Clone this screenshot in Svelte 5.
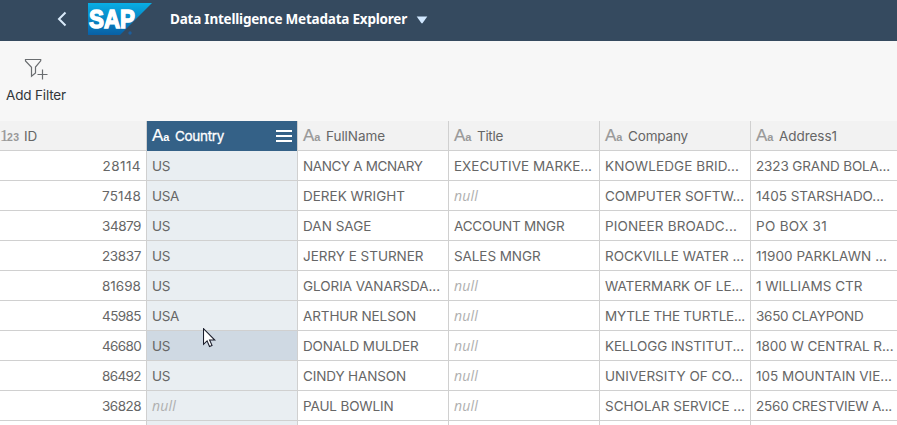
<script>
  const columns = [
    { name: 'ID', type: 'number', w: 13 },
    { name: 'Country', type: 'text', w: 49, selected: true },
    { name: 'FullName', type: 'text', w: 59 },
    { name: 'Title', type: 'text', w: 26 },
    { name: 'Company', type: 'text', w: 60 },
    { name: 'Address1', type: 'text', w: 58 }
  ];

  // Each cell is [text, text width in px]; null marks an empty value.
  const rows = [
    [['28114', 38.5], ['US', 18], ['NANCY A MCNARY', 119.5], ['EXECUTIVE MARKE...', 138], ['KNOWLEDGE BRID...', 134], ['2323 GRAND BOLA...', 134]],
    [['75148', 39], ['USA', 27], ['DEREK WRIGHT', 102], null, ['COMPUTER SOFTW...', 139], ['1405 STARSHADO...', 128]],
    [['34879', 39], ['US', 18], ['DAN SAGE', 68.5], ['ACCOUNT MNGR', 110.5], ['PIONEER BROADC...', 132], ['PO BOX 31', 71]],
    [['23837', 39], ['US', 18], ['JERRY E STURNER', 120.5], ['SALES MNGR', 86.5], ['ROCKVILLE WATER ...', 139], ['11900 PARKLAWN ...', 131]],
    [['81698', 39], ['US', 18], ['GLORIA VANARSDA...', 137], null, ['WATERMARK OF LE...', 138], ['1 WILLIAMS CTR', 106.5]],
    [['45985', 39], ['USA', 27], ['ARTHUR NELSON', 113], null, ['MYTLE THE TURTLE...', 140], ['3650 CLAYPOND', 107.5]],
    [['46680', 39], ['US', 18], ['DONALD MULDER', 115.5], null, ['KELLOGG INSTITUT...', 139], ['1800 W CENTRAL R...', 137.5]],
    [['86492', 39], ['US', 18], ['CINDY HANSON', 103], null, ['UNIVERSITY OF CO...', 138], ['105 MOUNTAIN VIE...', 136]],
    [['36828', 39], null, ['PAUL BOWLIN', 90.5], null, ['SCHOLAR SERVICE ...', 140], ['2560 CRESTVIEW A...', 136]]
  ];
  const hovered = 6;

  // Spreads the tracking so that the label takes the given width.
  function fit(node, width) {
    const natural = node.getBoundingClientRect().width;
    const spacing = (width - natural) / node.textContent.length;
    node.style.letterSpacing = `${spacing}px`;
  }
</script>

<div class="app">
  <header class="shell">
    <svg class="back" width="10" height="16" viewBox="0 0 10 16"><path d="M8.500 1.500 2 8l6.500 6.500" /></svg>
    <svg class="logo" width="65" height="33" viewBox="0 0 65 33">
      <defs>
        <linearGradient id="sap" x1="0" y1="0" x2="0" y2="1">
          <stop offset="0" stop-color="#08aee5" />
          <stop offset="1" stop-color="#0860a6" />
        </linearGradient>
      </defs>
      <path d="M0 0h64L32 32H0z" fill="url(#sap)" />
      <text x="1" y="25.200" textLength="46" lengthAdjust="spacingAndGlyphs">SAP</text>
      <circle cx="42" cy="30" r="1.700" fill="#1e5e9c" />
    </svg>
    <h1><span use:fit={237}>Data Intelligence Metadata Explorer</span></h1>
    <svg class="caret" width="12" height="8" viewBox="0 0 12 8"><path d="M.7.500h10.600L6.700 7.100Q6 7.900 5.300 7.100z" /></svg>
  </header>

  <div class="toolbar">
    <button>
      <svg width="24" height="23" viewBox="0 0 24 23">
        <path d="M1.500 1.500h15.200v1.300L11.500 9v6l-4 3.300V9.300L1.500 3z" />
        <path d="M18.500 11.500v10M13.500 16.500h10" />
      </svg>
      <span use:fit={60}>Add Filter</span>
    </button>
  </div>

  <div class="table">
    <div class="row head">
      {#each columns as col}
        <div class="cell" class:selected={col.selected}>
          {#if col.type === 'number'}
            <span class="type num"><b>1</b><small>23</small></span>
          {:else}
            <span class="type"><b>A</b><small>a</small></span>
          {/if}
          <span class="label"><span use:fit={col.w}>{col.name}</span></span>
          {#if col.selected}
            <svg class="menu" width="16" height="13" viewBox="0 0 16 13"><path d="M0 1h16M0 6h16M0 11h16" /></svg>
          {/if}
        </div>
      {/each}
    </div>
    {#each rows as row, r}
      <div class="row">
        {#each row as cell, c}
          <div class="cell" class:tint={c === 1} class:hover={c === 1 && r === hovered}>
            {#if cell}
              <span use:fit={cell[1]}>{cell[0]}</span>
            {:else}
              <i use:fit={24}>null</i>
            {/if}
          </div>
        {/each}
      </div>
    {/each}
    <div class="row">
      {#each columns as _, c}
        <div class="cell" class:tint={c === 1}></div>
      {/each}
    </div>
  </div>

  <svg class="cursor" width="13" height="20" viewBox="0 0 13 20">
    <path d="M.5.700v15.600l3.600-3.400 2.400 5.600 2.500-1.100-2.400-5.400h5.200z" />
  </svg>
</div>

<style>
  :global(body) {
    margin: 0;
    overflow: hidden;
  }
  .app {
    position: relative;
    width: 897px;
    height: 425px;
    overflow: hidden;
    background: #f7f7f7;
    color: #666;
  }
  .cell, button {
    font: 13.5px/20px Inter, Roboto, sans-serif;
  }
  span, i {
    white-space: pre;
  }
  .shell {
    display: flex;
    align-items: flex-start;
    box-sizing: border-box;
    height: 41px;
    padding-left: 57px;
    background: #354a5f;
  }
  .back {
    margin-top: 11px;
    fill: none;
    stroke: #d9eafa;
    stroke-width: 2;
  }
  .logo {
    margin: 3px 0 0 21px;
  }
  .logo text {
    font: bold 26px 'Liberation Sans', sans-serif;
    fill: #fff;
    stroke: #fff;
    stroke-width: 1.5;
  }
  h1 {
    width: 247px;
    margin: 9px 0 0 17px;
    font: bold 13.5px/20px 'Noto Sans', sans-serif;
    color: #fff;
  }
  .caret {
    margin-top: 16px;
    margin-left: -1px;
    fill: #d1e8ff;
  }
  .toolbar {
    height: 80px;
  }
  button {
    display: flex;
    flex-direction: column;
    align-items: flex-start;
    padding: 17px 0 0 6px;
    border: 0;
    background: none;
    color: #32363a;
  }
  button svg {
    margin: 0 0 4px 18px;
    fill: none;
    stroke: #6a6d70;
    stroke-width: 1.2;
  }
  .row {
    display: grid;
    grid-template-columns: 147px repeat(5, 151px);
    width: 902px;
  }
  .cell {
    display: flex;
    align-items: center;
    box-sizing: border-box;
    height: 30px;
    padding: 1px 5px 0;
    border-right: 1px solid #d0d0d0;
    border-bottom: 1px solid #d0d0d0;
    background: #fff;
    overflow: hidden;
  }
  .cell:first-child {
    justify-content: flex-end;
  }
  .cell.tint {
    background: #e9eef2;
  }
  .cell.hover {
    background: #cfd9e3;
  }
  .head .cell {
    background: #f2f2f2;
  }
  .head .cell:first-child {
    justify-content: flex-start;
    padding-left: 0;
  }
  .head .cell.selected {
    border-bottom: 0;
    padding-bottom: 1px;
    background: #346187;
    color: #fff;
  }
  .selected .label {
    -webkit-text-stroke: 0.3px #fff;
  }
  .type {
    display: flex;
    align-items: baseline;
    flex: none;
    width: 23px;
    color: #999;
  }
  .type b {
    font: 17px/20px 'Liberation Sans', sans-serif;
    -webkit-text-stroke: 0.2px;
  }
  .type small {
    font: bold 11px/18px 'Liberation Sans', sans-serif;
  }
  .type.num {
    width: 24px;
  }
  .type.num b {
    width: 7px;
    font: 17px/20px 'Liberation Serif', serif;
    letter-spacing: -1.5px;
  }
  .type.num small {
    font: bold 10.5px/18px 'Liberation Sans', sans-serif;
    letter-spacing: 0.3px;
  }
  .selected .type {
    color: #fff;
  }
  .menu {
    margin-left: auto;
    stroke: #fff;
    stroke-width: 2;
  }
  i {
    font-family: 'Open Sans', sans-serif;
    font-size: 14px;
    color: #b0b0b0;
  }
  .cursor {
    position: absolute;
    left: 203px;
    top: 328px;
    fill: #fff;
    stroke: #1a1d2b;
    stroke-width: 1.1;
  }
</style>
